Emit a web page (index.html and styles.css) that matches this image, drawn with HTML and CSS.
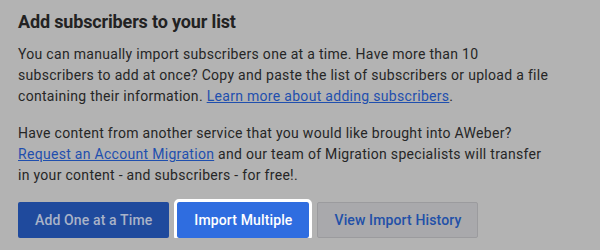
FILE: index.html
```html
<!DOCTYPE html>
<html lang="en">
<head>
    <meta charset="UTF-8">
    <meta name="viewport" content="width=device-width, initial-scale=1.0">
    <title>Add subscribers</title>
    <link rel="stylesheet" href="styles.css">
</head>
<body>
    <div class="panel">
        <h1>Add subscribers to your list</h1>

        <p>You can manually import subscribers one at a time. Have more than 10 subscribers to add at once? Copy and paste the list of subscribers or upload a file containing their information. <a href="#">Learn more about adding subscribers</a>.</p>

        <p>Have content from another service that you would like brought into AWeber? <a href="#">Request an Account Migration</a> and our team of Migration specialists will transfer in your content - and subscribers - for free!.</p>

        <div class="actions">
            <button class="btn btn-dark">Add One at a Time</button>
            <button class="btn btn-primary focused">Import Multiple</button>
            <button class="btn btn-outline">View Import History</button>
        </div>
    </div>
</body>
</html>
```

FILE: styles.css
```css
body {
    margin: 0;
    background: #b3b3b3;
    font-family: Roboto, "Liberation Sans", Arial, sans-serif;
    color: #262626;
}

.panel {
    width: 536px;
    padding: 10px 18px 0;
}

h1 {
    margin: 0 0 10px;
    font-size: 18px;
    line-height: 24px;
    font-weight: 700;
    letter-spacing: -0.15px;
    color: #222;
}

p {
    margin: 0 0 16px;
    font-size: 14px;
    line-height: 21px;
    letter-spacing: 0.3px;
}

a {
    color: #1f4fae;
    text-decoration: underline;
}

.actions {
    display: flex;
    gap: 8px;
}

.btn {
    height: 36px;
    padding: 0 16px;
    border: 1px solid transparent;
    border-radius: 2px;
    font-family: inherit;
    font-size: 14px;
    font-weight: 500;
    letter-spacing: 0.13px;
    cursor: pointer;
}

.btn-dark {
    background: #1f4a9d;
    color: #a9b3c8;
}

.btn-primary {
    background: #2f6de0;
    color: #fff;
}

.btn-outline {
    background: #a9a9ac;
    border-color: #9b9b9e;
    color: #2250a8;
}

/* Focus ring on the active button */
.focused {
    outline: 3px solid #fff;
}
```
